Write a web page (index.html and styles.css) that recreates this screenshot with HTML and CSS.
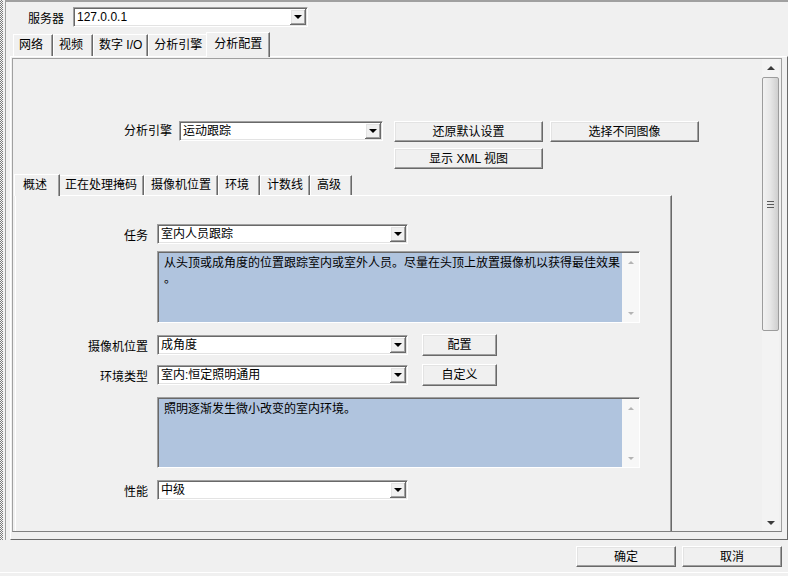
FILE: index.html
```html
<!DOCTYPE html>
<html lang="zh-CN">
<head>
    <meta charset="UTF-8">
    <title>分析配置</title>
    <link rel="stylesheet" href="styles.css">
</head>
<body>
    <div class="window">
        <div class="grip"></div>
        <div class="pane">
            <div class="server-row">
                <span>服务器</span>
                <div class="combo combo-server">
                    <span class="combo-text">127.0.0.1</span>
                    <span class="combo-btn"></span>
                </div>
            </div>

            <div class="tabs tabs-top">
                <div class="tab">网络</div>
                <div class="tab">视频</div>
                <div class="tab">数字 I/O</div>
                <div class="tab">分析引擎</div>
                <div class="tab active">分析配置</div>
            </div>

            <div class="tab-panel">
                <div class="scroll-view">
                    <div class="scroll-content">
                        <div class="engine">
                            <span class="engine-label">分析引擎</span>
                            <div class="combo combo-engine">
                                <span class="combo-text">运动跟踪</span>
                                <span class="combo-btn"></span>
                            </div>
                            <div class="engine-buttons">
                                <button class="btn">还原默认设置</button>
                                <button class="btn">选择不同图像</button>
                                <button class="btn">显示 XML 视图</button>
                            </div>
                        </div>

                        <div class="tabs tabs-inner">
                            <div class="tab active">概述</div>
                            <div class="tab">正在处理掩码</div>
                            <div class="tab">摄像机位置</div>
                            <div class="tab">环境</div>
                            <div class="tab">计数线</div>
                            <div class="tab">高级</div>
                        </div>

                        <div class="inner-panel">
                            <div class="field">
                                <span class="field-label">任务</span>
                                <div class="combo combo-field">
                                    <span class="combo-text">室内人员跟踪</span>
                                    <span class="combo-btn"></span>
                                </div>
                            </div>
                            <div class="desc desc-task">
                                <div class="desc-text">从头顶或成角度的位置跟踪室内或室外人员。尽量在头顶上放置摄像机以获得最佳效果。</div>
                                <div class="desc-scroll"><span class="mini-up"></span><span class="mini-down"></span></div>
                            </div>

                            <div class="field field-camera">
                                <span class="field-label">摄像机位置</span>
                                <div class="combo combo-field">
                                    <span class="combo-text">成角度</span>
                                    <span class="combo-btn"></span>
                                </div>
                                <button class="btn btn-side">配置</button>
                            </div>
                            <div class="field field-env">
                                <span class="field-label">环境类型</span>
                                <div class="combo combo-field">
                                    <span class="combo-text">室内:恒定照明通用</span>
                                    <span class="combo-btn"></span>
                                </div>
                                <button class="btn btn-side">自定义</button>
                            </div>
                            <div class="desc desc-env">
                                <div class="desc-text">照明逐渐发生微小改变的室内环境。</div>
                                <div class="desc-scroll"><span class="mini-up"></span><span class="mini-down"></span></div>
                            </div>

                            <div class="field field-perf">
                                <span class="field-label">性能</span>
                                <div class="combo combo-field">
                                    <span class="combo-text">中级</span>
                                    <span class="combo-btn"></span>
                                </div>
                            </div>
                        </div>
                    </div>

                    <div class="vscroll">
                        <div class="arrow-btn"><span class="arrow-up"></span></div>
                        <div class="thumb"><span class="grip-lines"></span></div>
                        <div class="track"></div>
                        <div class="arrow-btn"><span class="arrow-down"></span></div>
                    </div>
                </div>
            </div>
        </div>
    </div>

    <div class="footer">
        <button class="btn btn-footer">确定</button>
        <button class="btn btn-footer">取消</button>
    </div>
</body>
</html>
```

FILE: styles.css
```css
* {
    margin: 0;
    padding: 0;
    box-sizing: border-box;
}

body {
    width: 788px;
    height: 576px;
    overflow: hidden;
    background: #f0f0f0;
    font-family: "Liberation Sans", "Noto Sans CJK SC", sans-serif;
    font-size: 12px;
    color: #000;
}

.window {
    display: flex;
    height: 540px;
}

.grip {
    width: 3px;
    margin-right: 2px;
    background: repeating-conic-gradient(#7a7a7a 0 25%, #f4f4f4 0 50%) 0 0 / 2px 2px;
}

.pane {
    flex: 1;
    border-left: 1px solid #a0a0a0;
    border-top: 2px solid #a0a0a0;
}

.server-row {
    display: flex;
    align-items: center;
    gap: 9px;
    height: 20px;
    margin-top: 5px;
    padding-left: 22px;
}

/* combo boxes */
.combo {
    display: flex;
    height: 20px;
    background: #fff;
    border: 1px solid;
    border-color: #a0a0a0 #fff #fff #a0a0a0;
    box-shadow: inset 1px 1px #696969, inset -1px -1px #e3e3e3;
}

.combo-text {
    flex: 1;
    padding-left: 3px;
    line-height: 18px;
    white-space: nowrap;
    overflow: hidden;
}

.combo-btn {
    display: flex;
    align-items: center;
    justify-content: center;
    width: 16px;
    height: 16px;
    margin: 1px 1px 1px 0;
    background: #f0f0f0;
    box-shadow: inset -1px -1px #696969, inset 1px 1px #fff, inset -2px -2px #a0a0a0, inset 2px 2px #e3e3e3;
}

.combo-btn::after {
    content: "";
    border-top: 4px solid #000;
    border-left: 4px solid transparent;
    border-right: 4px solid transparent;
}

.combo-server { width: 235px; }
.combo-engine { width: 204px; }
.combo-field { width: 251px; }

/* buttons */
.btn {
    height: 21px;
    background: #f0f0f0;
    border: 1px solid;
    border-color: #fff #696969 #696969 #fff;
    box-shadow: inset -1px -1px #a0a0a0, inset 1px 1px #e3e3e3;
    font-family: inherit;
    font-size: 12px;
    line-height: 18px;
    color: #000;
}

/* tabs */
.tabs {
    display: flex;
    align-items: flex-end;
}

.tab {
    position: relative;
    padding: 0 6px;
    border: 1px solid;
    border-bottom: none;
    border-color: #fff #696969 transparent #fff;
    box-shadow: inset -1px 0 #a0a0a0;
    white-space: nowrap;
}

.tab.active {
    z-index: 1;
    margin: 0 -2px -1px;
    padding: 0 8px;
    background: #f0f0f0;
}

.tabs-top {
    height: 24px;
    margin-top: 5px;
    padding-left: 7px;
}

.tabs-top .tab {
    min-width: 40px;
    height: 22px;
    padding: 0 5px;
    line-height: 20px;
}

.tabs-top .tab.active {
    min-width: 44px;
    height: 25px;
    padding: 0 7px;
    line-height: 22px;
}

.tab-panel {
    height: 484px;
    margin-left: 4px;
    padding: 1px 0 0 1px;
    border: 1px solid;
    border-color: #fff #696969 #696969 #fff;
}

.scroll-view {
    display: flex;
    width: 770px;
    height: 474px;
    border: 1px solid #a0a0a0;
    border-bottom-color: #808080;
}

.scroll-content {
    width: 749px;
    height: 472px;
    overflow: hidden;
}

/* engine row */
.engine {
    display: flex;
    align-items: flex-start;
    margin-top: 62px;
}

.engine-label {
    width: 159px;
    margin-right: 7px;
    text-align: right;
    line-height: 20px;
}

.engine .combo {
    margin-right: 11px;
}

.engine-buttons {
    display: grid;
    grid-template-columns: 149px 149px;
    gap: 6px 7px;
}

.tabs-inner {
    height: 21px;
    margin-top: 5px;
    padding-left: 3px;
}

.tabs-inner .tab {
    min-width: 42px;
    height: 20px;
    line-height: 18px;
}

.tabs-inner .tab.active {
    min-width: 46px;
    height: 22px;
    line-height: 20px;
}

.inner-panel {
    width: 657px;
    height: 400px;
    margin-left: 2px;
    padding-top: 28px;
    border: 1px solid;
    border-bottom: none;
    border-color: #fff #696969 transparent #fff;
    box-shadow: inset -1px 0 #a0a0a0;
}

.field {
    display: flex;
    align-items: center;
    height: 22px;
}

.field-label {
    width: 132px;
    margin-right: 9px;
    text-align: right;
}

.btn-side {
    width: 75px;
    height: 22px;
    margin-left: 14px;
}

.field:first-child { height: 20px; }
.field-camera { margin-top: 11px; }
.field-env { margin-top: 8px; }
.field-perf { margin-top: 12px; height: 20px; }

/* read-only description boxes */
.desc {
    display: flex;
    width: 483px;
    margin-left: 141px;
    border: 1px solid;
    border-color: #a0a0a0 #fff #fff #a0a0a0;
}

.desc-task { height: 72px; margin-top: 7px; }
.desc-env { height: 71px; margin-top: 11px; }

.desc-text {
    flex: 1;
    padding: 2px 0 0 5px;
    background: #b0c4de;
    line-height: 16px;
    line-break: anywhere;
    border-top: 1px solid #696969;
    border-left: 1px solid #696969;
}

.desc-scroll {
    display: flex;
    flex-direction: column;
    justify-content: space-between;
    align-items: center;
    width: 17px;
    padding: 8px 0 7px;
    background: #f7f7f7;
    border-top: 1px solid #696969;
}

.mini-up {
    border-bottom: 3px solid #b4b4b4;
    border-left: 3px solid transparent;
    border-right: 3px solid transparent;
}

.mini-down {
    border-top: 3px solid #b4b4b4;
    border-left: 3px solid transparent;
    border-right: 3px solid transparent;
}

/* main vertical scrollbar */
.vscroll {
    display: flex;
    flex-direction: column;
    width: 17px;
    height: 472px;
    margin-right: 2px;
    background: #f3f3f3;
}

.arrow-btn {
    display: flex;
    align-items: center;
    justify-content: center;
    height: 17px;
}

.arrow-up {
    border-bottom: 4px solid #3c3c3c;
    border-left: 4px solid transparent;
    border-right: 4px solid transparent;
}

.arrow-down {
    border-top: 4px solid #3c3c3c;
    border-left: 4px solid transparent;
    border-right: 4px solid transparent;
}

.thumb {
    display: flex;
    align-items: center;
    justify-content: center;
    height: 254px;
    margin-top: 1px;
    border: 1px solid #9c9c9c;
    border-radius: 2px;
    background: linear-gradient(to right, #f2f2f2, #e6e6e6 50%, #cfcfcf);
}

.grip-lines {
    width: 7px;
    height: 7px;
    background: repeating-linear-gradient(#5a5a5a 0 1px, transparent 1px 3px);
}

.track {
    flex: 1;
}

/* dialog buttons */
.footer {
    display: flex;
    justify-content: flex-end;
    gap: 6px;
    height: 33px;
    padding: 6px 6px 0 0;
    border-bottom: 1px solid #fff;
}

.btn-footer {
    width: 100px;
}
```
